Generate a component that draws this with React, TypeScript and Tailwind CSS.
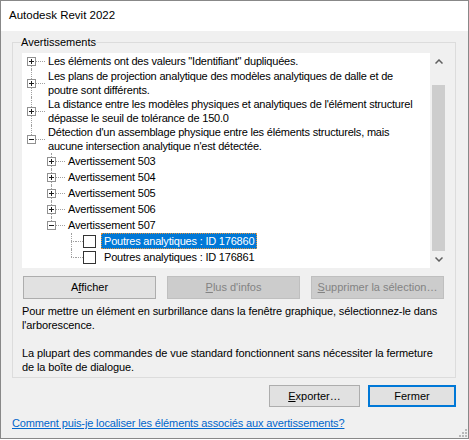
import React from "react";

type Row = {
  level: number;
  lines: string[];
  expander?: "plus" | "minus";
  check?: boolean;
  selected?: boolean;
  guides: boolean[];
  first?: boolean;
  last?: boolean;
};

const rows: Row[] = [
  { level: 0, expander: "plus", first: true, guides: [], lines: ['Les éléments ont des valeurs "Identifiant" dupliquées.'] },
  {
    level: 0,
    expander: "plus",
    guides: [],
    lines: ["Les plans de projection analytique des modèles analytiques de dalle et de", "poutre sont différents."],
  },
  {
    level: 0,
    expander: "plus",
    guides: [],
    lines: ["La distance entre les modèles physiques et analytiques de l'élément structurel", "dépasse le seuil de tolérance de 150.0"],
  },
  {
    level: 0,
    expander: "minus",
    last: true,
    guides: [],
    lines: ["Détection d'un assemblage physique entre les éléments structurels, mais", "aucune intersection analytique n'est détectée."],
  },
  { level: 1, expander: "plus", guides: [false], lines: ["Avertissement 503"] },
  { level: 1, expander: "plus", guides: [false], lines: ["Avertissement 504"] },
  { level: 1, expander: "plus", guides: [false], lines: ["Avertissement 505"] },
  { level: 1, expander: "plus", guides: [false], lines: ["Avertissement 506"] },
  { level: 1, expander: "minus", last: true, guides: [false], lines: ["Avertissement 507"] },
  { level: 2, check: true, selected: true, guides: [false, false], lines: ["Poutres analytiques : ID 176860"] },
  { level: 2, check: true, last: true, guides: [false, false], lines: ["Poutres analytiques : ID 176861"] },
];

function Expander({ kind }: { kind: "plus" | "minus" }) {
  return (
    <svg width="9" height="9" viewBox="0 0 9 9" className="block shrink-0">
      <rect x="0.5" y="0.5" width="8" height="8" fill="#ffffff" stroke="#919191" />
      <path d="M2 4.5h5" stroke="#1e1e1e" />
      {kind === "plus" && <path d="M4.5 2v5" stroke="#1e1e1e" />}
    </svg>
  );
}

function Chevron({ up }: { up?: boolean }) {
  return (
    <svg width="8" height="5" viewBox="0 0 8 5" className="block">
      <path d={up ? "M0.5 4.5L4 1l3.5 3.5" : "M0.5 0.5L4 4l3.5-3.5"} fill="none" stroke="#606060" strokeWidth="1.5" />
    </svg>
  );
}

function TreeRow({ row }: { row: Row }) {
  const tall = row.lines.length > 1;
  return (
    <div className={`flex ${tall ? "h-[28px]" : "h-[16px]"}`}>
      {row.guides.map((g, i) => (
        <div key={i} className="w-[20px] shrink-0 pl-[9px]">
          {g && <div className="h-full border-l border-dotted border-[#a0a0a0]" />}
        </div>
      ))}
      <div className="w-[5px] shrink-0" />
      <div className="flex w-[9px] shrink-0 flex-col items-center">
        <div className={`flex-1 ${row.first ? "" : "border-l border-dotted border-[#a0a0a0]"}`} />
        {row.expander ? (
          <Expander kind={row.expander} />
        ) : (
          <div className="h-0 w-[5px] self-end border-t border-dotted border-[#a0a0a0]" />
        )}
        <div className={`flex-1 ${row.last ? "" : "border-l border-dotted border-[#a0a0a0]"}`} />
      </div>
      <div className={`h-0 shrink-0 self-center border-t border-dotted border-[#a0a0a0] ${row.check ? "w-[7px]" : "w-[9px]"}`} />
      {row.check && (
        <>
          <div className="h-[13px] w-[13px] shrink-0 self-center border border-[#333333] bg-white" />
          <div className="w-[5px] shrink-0" />
        </>
      )}
      <div
        className={`flex items-center whitespace-nowrap border px-[2px] leading-[14px] tracking-[-0.2px] ${
          row.selected ? "border-dotted border-[#e3923a] bg-[#0078d7] text-white" : "border-transparent"
        }`}
      >
        <div>
          {row.lines.map((l, i) => (
            <div key={i}>{l}</div>
          ))}
        </div>
      </div>
    </div>
  );
}

export default function App() {
  return (
    <div className="h-[440px] w-[469px] bg-white font-['Liberation_Sans',Arial,sans-serif] text-[11px] text-black">
      <div className="flex h-[439px] w-[469px] flex-col border border-[#888888] bg-[#f0f0f0]">
        {/* title bar */}
        <div className="flex h-[30px] shrink-0 items-center bg-white pl-[8px] text-[11.5px]">Autodesk Revit 2022</div>

        <fieldset className="ml-[11px] mt-[4px] w-[444px] border border-[#dcdcdc] pb-[3px] pl-[9px] pr-[7px]">
          <legend className="ml-[-1px] px-0 leading-[14px]">Avertissements</legend>

          <div className="mt-[4px] flex h-[215px] w-[425px]">
            <div className="flex-1 overflow-hidden bg-white">
              {rows.map((r, i) => (
                <TreeRow key={i} row={r} />
              ))}
            </div>
            <div className="flex w-[17px] flex-col bg-[#f0f0f0]">
              <div className="flex h-[17px] items-center justify-center">
                <Chevron up />
              </div>
              <div className="flex-1 px-[2px] pt-[15px]">
                <div className="h-[166px] bg-[#cdcdcd]" />
              </div>
              <div className="flex h-[17px] items-center justify-center">
                <Chevron />
              </div>
            </div>
          </div>

          <div className="ml-[1px] mt-[8px] flex gap-[11px]">
            <button className="h-[23px] w-[133px] border border-[#adadad] bg-[#e1e1e1]">
              A<span className="underline">f</span>ficher
            </button>
            <button className="h-[23px] w-[133px] border border-[#bfbfbf] bg-[#cccccc] text-[#838383]">
              <span className="underline">P</span>lus d'infos
            </button>
            <button className="h-[23px] w-[133px] border border-[#bfbfbf] bg-[#cccccc] text-[#838383]">
              <span className="underline">S</span>upprimer la sélection…
            </button>
          </div>

          <div className="mt-[5px] whitespace-nowrap leading-[14px] tracking-[-0.1px]">
            <div>Pour mettre un élément en surbrillance dans la fenêtre graphique, sélectionnez-le dans</div>
            <div>l'arborescence.</div>
            <div className="mt-[14px]">La plupart des commandes de vue standard fonctionnent sans nécessiter la fermeture</div>
            <div>de la boîte de dialogue.</div>
          </div>
        </fieldset>

        <div className="mr-[12px] mt-[7px] flex justify-end gap-[8px]">
          <button className="h-[22px] w-[91px] border border-[#adadad] bg-[#e1e1e1]">
            <span className="underline">E</span>xporter…
          </button>
          <button className="h-[22px] w-[88px] border-2 border-[#0078d7] bg-[#e1e1e1]">Fermer</button>
        </div>

        <div className="flex flex-1 items-start justify-between pl-[11px] pr-[1px]">
          <a className="mt-[9px] leading-[14px] tracking-[-0.13px] text-[#0066cc] underline">
            Comment puis-je localiser les éléments associés aux avertissements?
          </a>
          <svg width="8" height="8" viewBox="0 0 8 8" className="mb-[1px] self-end">
            <rect x="6" y="0" width="2" height="2" fill="#b8b8b8" />
            <rect x="3" y="3" width="2" height="2" fill="#b8b8b8" />
            <rect x="6" y="3" width="2" height="2" fill="#b8b8b8" />
            <rect x="0" y="6" width="2" height="2" fill="#b8b8b8" />
            <rect x="3" y="6" width="2" height="2" fill="#b8b8b8" />
            <rect x="6" y="6" width="2" height="2" fill="#b8b8b8" />
          </svg>
        </div>
      </div>
    </div>
  );
}
